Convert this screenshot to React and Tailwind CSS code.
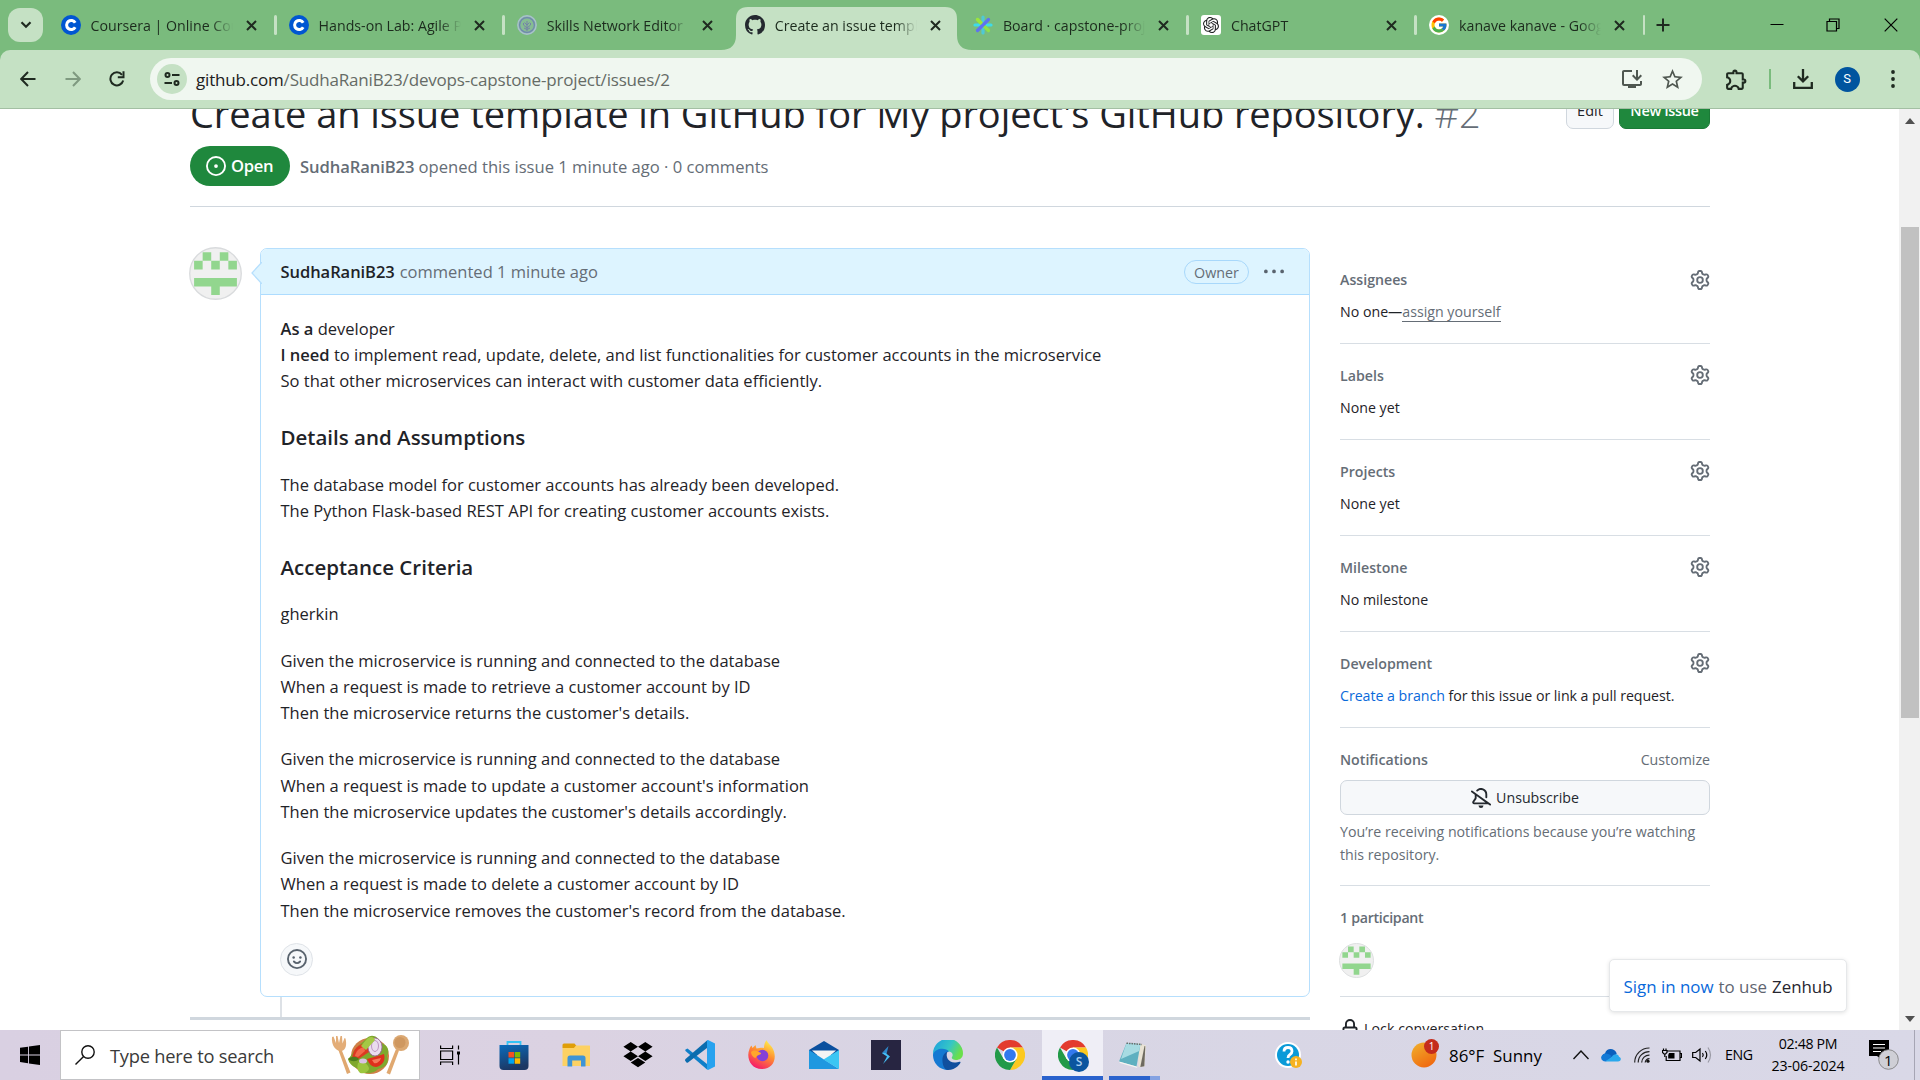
import React from "react";
import { SiOpenai } from "react-icons/si";
import { FcGoogle } from "react-icons/fc";
import { MdOutlineExtension, MdStarBorder, MdOutlineInstallDesktop } from "react-icons/md";

/* ---------- octicons ---------- */

const OCT = {
  issue: "M8 9.5a1.5 1.5 0 1 0 0-3 1.5 1.5 0 0 0 0 3ZM8 0a8 8 0 1 1 0 16A8 8 0 0 1 8 0ZM1.5 8a6.5 6.5 0 1 0 13 0 6.5 6.5 0 0 0-13 0Z",
  kebab: "M8 9a1.5 1.5 0 1 0 0-3 1.5 1.5 0 0 0 0 3ZM1.5 9a1.5 1.5 0 1 0 0-3 1.5 1.5 0 0 0 0 3Zm13 0a1.5 1.5 0 1 0 0-3 1.5 1.5 0 0 0 0 3Z",
  gear: "M8 0a8.2 8.2 0 0 1 .701.031C9.444.095 9.99.645 10.16 1.29l.288 1.107c.018.066.079.158.212.224.231.114.454.243.668.386.123.082.233.09.299.071l1.103-.303c.644-.176 1.392.021 1.82.63.27.385.506.792.704 1.218.315.675.111 1.422-.364 1.891l-.814.806c-.049.048-.098.147-.088.294.016.257.016.515 0 .772-.01.147.038.246.088.294l.814.806c.475.469.679 1.216.364 1.891a7.977 7.977 0 0 1-.704 1.217c-.428.61-1.176.807-1.82.63l-1.102-.302c-.067-.019-.177-.011-.3.071a5.909 5.909 0 0 1-.668.386c-.133.066-.194.158-.211.224l-.29 1.106c-.168.646-.715 1.196-1.458 1.26a8.006 8.006 0 0 1-1.402 0c-.743-.064-1.289-.614-1.458-1.26l-.289-1.106c-.018-.066-.079-.158-.212-.224a5.738 5.738 0 0 1-.668-.386c-.123-.082-.233-.09-.299-.071l-1.103.303c-.644.176-1.392-.021-1.82-.63a8.12 8.12 0 0 1-.704-1.218c-.315-.675-.111-1.422.363-1.891l.815-.806c.05-.048.098-.147.088-.294a6.214 6.214 0 0 1 0-.772c.01-.147-.038-.246-.088-.294l-.815-.806C.635 6.045.431 5.298.746 4.623a7.92 7.92 0 0 1 .704-1.217c.428-.61 1.176-.807 1.82-.63l1.102.302c.067.019.177.011.3-.071.214-.143.437-.272.668-.386.133-.066.194-.158.211-.224l.29-1.106C6.009.645 6.556.095 7.299.03 7.53.01 7.764 0 8 0Zm-.571 1.525c-.036.003-.108.036-.137.146l-.289 1.105c-.147.561-.549.967-.998 1.189-.173.086-.34.183-.5.29-.417.278-.97.423-1.529.27l-1.103-.303c-.109-.03-.175.016-.195.045-.22.312-.412.644-.573.99-.014.031-.021.11.059.19l.815.806c.411.406.562.957.53 1.456a4.709 4.709 0 0 0 0 .582c.032.499-.119 1.05-.53 1.456l-.815.806c-.081.08-.073.159-.059.19.162.346.353.677.573.989.02.03.085.076.195.046l1.102-.303c.56-.153 1.113-.008 1.53.27.161.107.328.204.501.29.447.222.85.629.997 1.189l.289 1.105c.029.109.101.143.137.146a6.6 6.6 0 0 0 1.142 0c.036-.003.108-.036.137-.146l.289-1.105c.147-.561.549-.967.998-1.189.173-.086.34-.183.5-.29.417-.278.97-.423 1.529-.27l1.103.303c.109.029.175-.016.195-.045.22-.313.411-.644.573-.99.014-.031.021-.11-.059-.19l-.815-.806c-.411-.406-.562-.957-.53-1.456a4.709 4.709 0 0 0 0-.582c-.032-.499.119-1.05.53-1.456l.815-.806c.081-.08.073-.159.059-.19a6.464 6.464 0 0 0-.573-.989c-.02-.03-.085-.076-.195-.046l-1.102.303c-.56.153-1.113.008-1.53-.27a4.44 4.44 0 0 0-.501-.29c-.447-.222-.85-.629-.997-1.189l-.289-1.105c-.029-.11-.101-.143-.137-.146a6.6 6.6 0 0 0-1.142 0ZM11 8a3 3 0 1 1-6 0 3 3 0 0 1 6 0ZM9.5 8a1.5 1.5 0 1 0-3.001.001A1.5 1.5 0 0 0 9.5 8Z",
  lock: "M4 4a4 4 0 0 1 8 0v2h.25c.966 0 1.75.784 1.75 1.75v5.5A1.75 1.75 0 0 1 12.25 15h-8.5A1.75 1.75 0 0 1 2 13.25v-5.5C2 6.784 2.784 6 3.75 6H4Zm8.25 3.5h-8.5a.25.25 0 0 0-.25.25v5.5c0 .138.112.25.25.25h8.5a.25.25 0 0 0 .25-.25v-5.5a.25.25 0 0 0-.25-.25ZM10.5 6V4a2.5 2.5 0 1 0-5 0v2Z",
  bellSlash: "m4.182 4.31.016.011 10.104 7.316.013.01 1.375.996a.75.75 0 1 1-.88 1.214L13.626 13H2.518a1.516 1.516 0 0 1-1.263-2.36l1.703-2.554A.255.255 0 0 0 3 7.947V5.305L.31 3.357a.75.75 0 1 1 .88-1.214Zm7.373 7.19L4.5 6.391v1.556c0 .346-.102.683-.294.97l-1.703 2.556a.017.017 0 0 0-.003.01c0 .005.002.009.005.012l.006.004.007.001ZM8 1.5c-.997 0-1.895.416-2.534 1.086A.75.75 0 1 1 4.38 1.55 5 5 0 0 1 13 5v2.373a.75.75 0 0 1-1.5 0V5A3.5 3.5 0 0 0 8 1.5ZM8 16a2 2 0 0 1-1.985-1.75c-.017-.137.097-.25.235-.25h3.5c.138 0 .252.113.235.25A2 2 0 0 1 8 16Z",
  github: "M8 0c4.42 0 8 3.58 8 8a8.013 8.013 0 0 1-5.45 7.59c-.4.08-.55-.17-.55-.38 0-.27.01-1.13.01-2.2 0-.75-.25-1.23-.54-1.48 1.78-.2 3.65-.88 3.65-3.95 0-.88-.31-1.59-.82-2.15.08-.2.36-1.02-.08-2.12 0 0-.67-.22-2.2.82-.64-.18-1.32-.27-2-.27-.68 0-1.36.09-2 .27-1.53-1.03-2.2-.82-2.2-.82-.44 1.1-.16 1.92-.08 2.12-.51.56-.82 1.28-.82 2.15 0 3.06 1.86 3.75 3.64 3.95-.23.2-.44.55-.51 1.07-.46.21-1.61.55-2.33-.66-.15-.24-.6-.83-1.23-.82-.67.01-.27.38.01.53.34.19.73.9.82 1.13.16.45.68 1.31 2.69.94 0 .67.01 1.3.01 1.49 0 .21-.15.45-.55.38A7.995 7.995 0 0 1 0 8c0-4.42 3.58-8 8-8Z",
};

function Octicon({ name, className = "size-5" }) {
  return (
    <svg viewBox="0 0 16 16" fill="currentColor" className={className}>
      <path d={OCT[name]} />
    </svg>
  );
}

/* ---------- favicons ---------- */

function CourseraIcon() {
  return (
    <svg viewBox="0 0 20 20" className="size-5">
      <circle cx="10" cy="10" r="10" fill="#0056d2" />
      <path d="M14.2 7.7A4.6 4.6 0 1 0 14.2 12.3" fill="none" stroke="#fff" strokeWidth="3" />
    </svg>
  );
}

function SkillsIcon() {
  return (
    <svg viewBox="0 0 20 20" className="size-5" fill="none">
      <circle cx="10" cy="10" r="9.2" fill="#86bd92" stroke="#a9bfd0" strokeWidth="1.4" />
      <circle cx="10" cy="10" r="7.4" stroke="#6f83b5" strokeWidth="1.2" />
      <path d="M10 16V6M10 13L6.5 10M10 13l3.5-3M10 10L7.5 7.5M10 10l2.5-2.5M6.5 10V8M13.5 10V8M7 13l3 1.500 3-1.500" stroke="#7583a8" strokeWidth="1" />
    </svg>
  );
}

function ZenIcon() {
  return (
    <svg viewBox="0 0 20 20" className="size-5" fill="none" strokeWidth="3.200" strokeLinecap="round">
      <path d="M10 2v16" stroke="#4fc9d6" />
      <path d="M2 10h16" stroke="#3edbe9" />
      <path d="M4.500 4.500l11 11" stroke="#8fe14a" />
      <path d="M15.500 4.500l-11 11" stroke="#5f72f0" />
      <path d="M4.500 4.500l3 3" stroke="#9be53c" />
    </svg>
  );
}

const TABS = [
  { title: "Coursera | Online Courses", icon: <CourseraIcon />, sep: true },
  { title: "Hands-on Lab: Agile Planning", icon: <CourseraIcon />, sep: true },
  { title: "Skills Network Editor", icon: <SkillsIcon />, sep: false },
  { title: "Create an issue template", icon: <Octicon name="github" className="size-5 text-[#24292f]" />, active: true },
  { title: "Board · capstone-project", icon: <ZenIcon />, sep: true },
  {
    title: "ChatGPT",
    icon: (
      <span className="flex size-5 items-center justify-center rounded-[3px] bg-white">
        <SiOpenai className="size-4 text-[#202123]" />
      </span>
    ),
    sep: true,
  },
  {
    title: "kanave kanave - Google Search",
    icon: (
      <span className="flex size-5 items-center justify-center rounded-full bg-white">
        <FcGoogle className="size-[18px]" />
      </span>
    ),
    sep: true,
  },
];

function Tab({ title, icon, active, sep }) {
  return (
    <div className="relative flex h-[50px] w-[228.1px] shrink-0 items-center pl-2.5">
      {active && (
        <svg viewBox="0 0 251 43" className="absolute -left-[14px] top-[7px] h-[43px] w-[251px]" fill="#c5e1c4">
          <path d="M0 43Q15 43 15 28V12Q15 0 27 0H224Q236 0 236 12V28Q236 43 251 43Z" />
        </svg>
      )}
      <span className="relative shrink-0">{icon}</span>
      <span className="relative ml-2.5 w-[145px] overflow-hidden whitespace-nowrap pt-px text-[14.2px] leading-5 text-[#1c2b1d] [mask-image:linear-gradient(to_right,black_120px,transparent_142px)]">
        {title}
      </span>
      <svg viewBox="0 0 30 20" className="relative h-5 w-[30px]" stroke="#1f2a20" strokeWidth="2" fill="none">
        <path d="M11 6l9 9M20 6l-9 9" />
      </svg>
      {sep && <span className="ml-[8.500px] h-5 w-[2.500px] rounded-full bg-[#c5e1c4]" />}
    </div>
  );
}

function TabStrip() {
  return (
    <div className="flex h-[50px] items-center bg-[#7abb7d]">
      <div className="ml-2 mr-[7.500px] flex h-[34px] w-[35px] shrink-0 items-center justify-center rounded-[12px] bg-[#c5e1c4]">
        <svg viewBox="0 0 12 8" className="h-2 w-3" fill="none" stroke="#1f2a20" strokeWidth="2.200">
          <path d="M1.500 1.200L6 5.700l4.500-4.500" />
        </svg>
      </div>
      {TABS.map((t) => (
        <Tab key={t.title} {...t} />
      ))}
      <svg viewBox="0 0 14 14" className="ml-[9px] size-[14px] shrink-0" stroke="#1f2a20" strokeWidth="2" fill="none">
        <path d="M7 .5v13M.5 7h13" />
      </svg>
      <div className="ml-auto flex shrink-0 items-center text-black">
        <svg viewBox="0 0 14 14" className="mr-[42px] size-[14px]" stroke="currentColor">
          <path d="M.5 6.500h13" />
        </svg>
        <svg viewBox="0 0 14 14" className="mr-[44px] size-[14px]" fill="none" stroke="currentColor" strokeWidth="1.200">
          <path d="M1 3.500h9.500V13H1zM3.500 3.500V1H13v9.500h-2.500" />
        </svg>
        <svg viewBox="0 0 14 14" className="mr-[22px] size-[14px]" fill="none" stroke="currentColor" strokeWidth="1.200">
          <path d="M.7.7l12.600 12.600M13.300.7L.7 13.300" />
        </svg>
      </div>
    </div>
  );
}

function Toolbar() {
  return (
    <div className="bg-[#7abb7d]">
      <div className="flex h-[59px] items-center rounded-t-[10px] border-b border-[#a3bfa3] bg-[#c5e1c4] text-[#1f2a20]">
        <svg viewBox="0 0 16 16" className="ml-5 h-4 w-4" fill="none" stroke="currentColor" strokeWidth="2">
          <path d="M15.500 8H1.500M8 1L1.200 8 8 15" />
        </svg>
        <svg viewBox="0 0 16 16" className="ml-[29px] h-4 w-4 text-[#7f9a80]" fill="none" stroke="currentColor" strokeWidth="2">
          <path d="M.5 8h14M8 1l6.800 7L8 15" />
        </svg>
        <svg viewBox="0 0 16 16" className="ml-[28px] h-4 w-4" fill="none" stroke="currentColor" strokeWidth="2">
          <path d="M14.200 9.500A6.500 6.500 0 1 1 13 3.800" />
          <path d="M14.500.3v5.900H8.800" />
        </svg>
        <div className="ml-[25px] flex h-[42px] w-[1552px] items-center rounded-full bg-[#f0f7f0] pl-[6.500px]">
          <span className="flex size-[30px] items-center justify-center rounded-full bg-[#c5e1c4]">
            <svg viewBox="0 0 16 14" className="h-[14px] w-4" fill="none" stroke="currentColor" strokeWidth="2">
              <circle cx="3.500" cy="3" r="2" />
              <path d="M8 3h7.500M.5 11h7.500" />
              <circle cx="12.500" cy="11" r="2" />
            </svg>
          </span>
          <span className="ml-[9.500px] whitespace-nowrap pt-px text-[17px] leading-6 tracking-[-0.18px] text-[#202020]">
            github.com<span className="text-[#656b66]">/SudhaRaniB23/devops-capstone-project/issues/2</span>
          </span>
          <div className="ml-auto mr-[17px] flex items-center gap-[16px] text-[#4f5750]">
            <MdOutlineInstallDesktop className="size-6" />
            <MdStarBorder className="size-[25px]" />
          </div>
        </div>
        <MdOutlineExtension className="ml-[22px] size-[25px]" />
        <span className="ml-[20px] h-5 w-[1.500px] bg-[#7abb7d]" />
        <svg viewBox="0 0 20 20" className="ml-[22px] size-5" fill="none" stroke="currentColor" strokeWidth="2.300">
          <path d="M10 0v12M4.800 7.200L10 12.400l5.200-5.200M1.200 13v5.800h17.600V13" />
        </svg>
        <span className="ml-[22px] flex size-[25px] items-center justify-center rounded-full bg-[#00549f] font-[Roboto] text-[13px] text-white">S</span>
        <svg viewBox="0 0 4 18" className="ml-[31px] h-[18px] w-1" fill="currentColor">
          <circle cx="2" cy="2" r="1.900" />
          <circle cx="2" cy="9" r="1.900" />
          <circle cx="2" cy="16" r="1.900" />
        </svg>
      </div>
    </div>
  );
}

/* ---------- issue page ---------- */

function Avatar({ className }) {
  return (
    <svg viewBox="0 0 52 52" className={className}>
      <circle cx="26" cy="26" r="25.300" fill="#f0f0f0" stroke="#d9dbdd" strokeWidth="1.300" />
      <path
        d="M13.400 5.200h8.400v8.400h-8.400zM30.200 5.200h8.400v8.400h-8.400zM5 13.600h8.400V22H5zM21.800 13.600h8.400V22h-8.400zM38.600 13.600H47V22h-8.400zM5 30.400h42v8.400H30.200v8.400h-8.400v-8.400H5z"
        fill="#92d68e"
      />
    </svg>
  );
}

function IssueHeader() {
  return (
    <div className="border-b border-[#d0d7de] pb-5">
      <div className="flex h-[59px] items-start justify-between">
        <h1 className="mt-px whitespace-nowrap text-[38px] leading-[50px] tracking-[-0.07px]">
          Create an issue template in GitHub for My project's GitHub repository.{" "}
          <span className="font-light text-[#656d76]">#2</span>
        </h1>
        <div className="mt-0.5 flex gap-[5px] text-[14.500px] font-medium">
          <span className="flex h-10 w-12 items-center justify-center rounded-[7px] border border-[#d0d7de] bg-[#f6f8fa] pt-1">Edit</span>
          <span className="flex h-10 w-[91px] items-center justify-center whitespace-nowrap rounded-[7px] border border-[#1b7a37] bg-[#1f883d] pt-1 font-semibold tracking-[-0.3px] text-white">
            New issue
          </span>
        </div>
      </div>
      <div className="flex items-center gap-2.5">
        <span className="flex h-10 w-[100px] items-center gap-[5px] rounded-full bg-[#1f883d] pl-4 text-[16.600px] font-semibold tracking-[-0.3px] text-white">
          <Octicon name="issue" />
          <span className="pt-px">Open</span>
        </span>
        <span className="pt-0.5 text-[16.600px] text-[#656d76]">
          <b className="font-semibold tracking-[-0.1px]">SudhaRaniB23</b> opened this issue 1 minute ago · 0 comments
        </span>
      </div>
    </div>
  );
}

const SCENARIOS = [
  [
    "Given the microservice is running and connected to the database",
    "When a request is made to retrieve a customer account by ID",
    "Then the microservice returns the customer's details.",
  ],
  [
    "Given the microservice is running and connected to the database",
    "When a request is made to update a customer account's information",
    "Then the microservice updates the customer's details accordingly.",
  ],
  [
    "Given the microservice is running and connected to the database",
    "When a request is made to delete a customer account by ID",
    "Then the microservice removes the customer's record from the database.",
  ],
];

function Comment() {
  return (
    <div className="w-[1120px]">
      <div className="flex justify-between">
        <Avatar className="-ml-px -mt-px size-[53px]" />
        <div className="relative flex h-[749px] w-[1050px] flex-col rounded-[7px] border border-[#b6dffd]">
          <svg viewBox="0 0 11 22" className="absolute -left-[10px] top-[13px] h-[22px] w-[11px]">
            <path d="M11 0L1 11l10 11" fill="#ddf4ff" stroke="#b6dffd" strokeWidth="1.300" />
          </svg>
          <div className="flex h-[46px] items-center rounded-t-[6px] border-b border-[#addcff] bg-[#ddf4ff] pl-[19.500px] pr-[25px] text-[16.500px]">
            <b className="pt-px font-semibold tracking-[-0.05px]">SudhaRaniB23</b>
            <span className="ml-[5px] pt-px text-[#656d76]">commented 1 minute ago</span>
            <span className="ml-auto flex h-6 w-[65px] items-center justify-center rounded-full border border-[#a8d8fb] pt-0.5 text-[14.300px] font-medium text-[#656d76]">
              Owner
            </span>
            <Octicon name="kebab" className="ml-[15px] size-5 text-[#59636e]" />
          </div>
          <div className="flex flex-col gap-5 px-[19.500px] pt-[20.500px] text-[16.530px] leading-[26.250px]">
            <p>
              <b className="font-semibold">As a</b> developer
              <br />
              <b className="font-semibold">I need</b> to implement read, update, delete, and list functionalities for customer accounts in the microservice
              <br />
              So that other microservices can interact with customer data efficiently.
            </p>
            <h3 className="mt-2.5 text-[20.500px] font-semibold leading-[27.300px]">Details and Assumptions</h3>
            <p>
              The database model for customer accounts has already been developed.
              <br />
              The Python Flask-based REST API for creating customer accounts exists.
            </p>
            <h3 className="mt-2.5 text-[20.500px] font-semibold leading-[27.300px]">Acceptance Criteria</h3>
            <p>gherkin</p>
            {SCENARIOS.map((lines) => (
              <div key={lines[1]}>
                {lines.map((l) => (
                  <p key={l}>{l}</p>
                ))}
              </div>
            ))}
          </div>
          <span className="ml-[19px] mt-[19px] flex size-[33px] items-center justify-center rounded-full border border-[#dfe3e8] bg-[#f6f8fa] text-[#59636e]">
            <svg viewBox="0 0 16 16" className="size-5" fill="currentColor">
              <circle cx="8" cy="8" r="7.250" fill="none" stroke="currentColor" strokeWidth="1.500" />
              <circle cx="5.300" cy="6.700" r="1" />
              <circle cx="10.700" cy="6.700" r="1" />
              <path d="M5.500 10q2.500 2.600 5 0" fill="none" stroke="currentColor" strokeWidth="1.500" strokeLinecap="round" />
            </svg>
          </span>
        </div>
      </div>
      <div className="ml-[90px] h-5 w-0.5 bg-[#dde1e6]" />
      <div className="h-[2.500px] bg-[#d0d7de]" />
    </div>
  );
}

function SideSection({ title, gearClass = "-mt-[3px] size-5", children }) {
  return (
    <section className="h-24 border-b border-[#d8dee4] pt-[21px]">
      <div className="flex h-[22px] items-center justify-between font-semibold text-[#656d76]">
        {title}
        <Octicon name="gear" className={gearClass} />
      </div>
      <div className="mt-2.5 leading-[22px]">{children}</div>
    </section>
  );
}

function Sidebar() {
  return (
    <aside className="w-[370px] text-[14.200px]">
      <SideSection title="Assignees" gearClass="size-5">
        No one—<span className="border-b border-[#656d76] text-[#656d76]">assign yourself</span>
      </SideSection>
      <SideSection title="Labels">None yet</SideSection>
      <SideSection title="Projects">None yet</SideSection>
      <SideSection title="Milestone">No milestone</SideSection>
      <SideSection title="Development">
        <span className="tracking-[-0.04px]">
          <span className="text-[#0969da]">Create a branch</span> for this issue or link a pull request.
        </span>
      </SideSection>
      <section className="h-[158px] border-b border-[#d8dee4] pt-[21px] text-[#656d76]">
        <div className="flex h-[22px] items-center justify-between">
          <span className="font-semibold">Notifications</span>
          <span>Customize</span>
        </div>
        <div className="mt-[9px] flex h-[35px] items-center justify-center gap-[5px] rounded-[7px] border border-[#d0d7de] bg-[#f6f8fa] font-medium text-[#24292f]">
          <Octicon name="bellSlash" />
          Unsubscribe
        </div>
        <p className="mt-[5px] leading-[23px]">
          You’re receiving notifications because you’re watching
          <br />
          this repository.
        </p>
      </section>
      <section className="h-[111px] border-b border-[#d8dee4] pt-[21px] text-[#656d76]">
        <div className="h-[22px] font-semibold leading-[22px] tracking-[-0.3px]">1 participant</div>
        <Avatar className="-ml-[1.500px] mt-[14px] size-[35px]" />
      </section>
      <div className="flex items-center gap-1 pt-[21px] font-medium tracking-[0.05px]">
        <Octicon name="lock" />
        Lock conversation
      </div>
    </aside>
  );
}

function Page() {
  return (
    <div className="relative flex h-[921px] justify-between overflow-hidden bg-white text-[#1f2328]">
      <div className="-mt-[22px] ml-[190px] w-[1520px]">
        <IssueHeader />
        <div className="mt-[41px] flex justify-between">
          <Comment />
          <Sidebar />
        </div>
      </div>
      <div className="flex w-[21px] flex-col items-center bg-[#f1f1f1]">
        <svg viewBox="0 0 10 6" className="mt-[9px] h-1.5 w-2.5" fill="#505050">
          <path d="M0 6L5 0l5 6z" />
        </svg>
        <div className="mt-[103px] h-[491px] w-[18px] bg-[#c1c1c1]" />
        <svg viewBox="0 0 10 6" className="mb-2 mt-auto h-1.5 w-2.5" fill="#505050">
          <path d="M0 0l5 6 5-6z" />
        </svg>
      </div>
      <div className="absolute bottom-[18px] right-[73px] flex h-[53px] w-[238px] items-center justify-center gap-[5px] whitespace-nowrap rounded-[5px] border border-[#e6e8ea] bg-white pt-[3px] text-[16.900px] text-[#5f6570] shadow-[0_1px_4px_rgba(0,0,0,0.12)]">
        <span className="font-medium text-[#0969da]">Sign in now</span> to use <span className="font-medium text-[#26262f]">Zenhub</span>
      </div>
    </div>
  );
}

/* ---------- taskbar ---------- */

function ChromeLogo({ className }) {
  return (
    <svg viewBox="0 0 30 30" className={className}>
      <path d="M15 15L2 7.500A15 15 0 0 1 28 7.500H15z" fill="#e33b2e" />
      <path d="M28 7.500A15 15 0 0 1 15 30L21.500 18.700 15 7.500z" fill="#fcc91f" />
      <path d="M15 30A15 15 0 0 1 2 7.500l6.500 11.200L15 22l6.500-3.300z" fill="#229a48" />
      <circle cx="15" cy="15" r="7.500" fill="#fff" />
      <circle cx="15" cy="15" r="5.900" fill="#3279ee" />
    </svg>
  );
}

const Store = () => (
  <svg viewBox="0 0 30 30" className="size-[30px]">
    <defs>
      <linearGradient id="store" x2="0.3" y2="1">
        <stop stopColor="#0a6cbc" />
        <stop offset="1" stopColor="#1c3763" />
      </linearGradient>
    </defs>
    <path d="M8.500 6V2h13v4" fill="none" stroke="#35c3f5" strokeWidth="1.800" />
    <path d="M.5 5h29v21q0 4-4 4h-21q-4 0-4-4z" fill="url(#store)" />
    <path d="M9.500 12H15v5.500H9.500z" fill="#f25022" />
    <path d="M15.700 12h5.500v5.500h-5.500z" fill="#7fba00" />
    <path d="M9.500 18.200H15v5.500H9.500z" fill="#00a4ef" />
    <path d="M15.700 18.200h5.500v5.500h-5.500z" fill="#ffb900" />
  </svg>
);

const Explorer = () => (
  <svg viewBox="0 0 30 30" className="size-[30px]">
    <path d="M1.500 5q0-1.500 1.500-1.500h10.500l2 2.500-2 2h-12z" fill="#e09e08" />
    <path d="M1.500 8H13l2-2.500h13.500q.5 0 .5.800V26H1.500z" fill="#fdd163" />
    <path d="M6.500 26.500V18q0-2.500 2.500-2.500h13q2.500 0 2.500 2.500v8.500H20V20.500h-8.800v6z" fill="#3e94d6" />
  </svg>
);

const Dropbox = () => (
  <svg viewBox="0 0 30 30" className="size-[30px]">
    <path d="M7.700 2l7.300 4.700-7.300 4.700L.4 6.700zM22.300 2l7.300 4.700-7.300 4.700L15 6.700zM7.700 11.600l7.300 4.700L7.700 21 .4 16.300zM22.300 11.600l7.300 4.700-7.300 4.700-7.300-4.700zM15 17.900l7.300 4.700L15 27.300l-7.300-4.700z" />
  </svg>
);

const VsCode = () => (
  <svg viewBox="0 0 30 30" className="size-[30px]">
    <path d="M2.500 8.500L22 24v5.500L.5 11q-.5-.8 0-1.500z" fill="#0f7fc9" />
    <path d="M.5 19L22 .5V8L3 22.500q-1 .5-1.500 0L.3 21q-.5-1 .2-2z" fill="#0b6cae" />
    <path d="M22 .3l1-.3 7 3.400v23.200L23 30l-1-.5z" fill="#27a2ef" />
  </svg>
);

const Firefox = () => (
  <svg viewBox="0 0 30 30" className="size-[30px]">
    <defs>
      <linearGradient id="fox" x1="0.8" x2="0.3" y2="1">
        <stop stopColor="#fff44f" />
        <stop offset="0.45" stopColor="#ff9130" />
        <stop offset="1" stopColor="#f5156c" />
      </linearGradient>
    </defs>
    <path d="M19.500.3c1.500 3.200 3.600 4.200 5.500 7C31 17 27 29 15 29S-1 17 2.500 9c.4-1.500 1.200-2.700 2-3.500l1 2.500 3-3 1 3.500c3-.5 5-1 7.500-.5C17 5 18 2 19.500.3z" fill="url(#fox)" />
    <circle cx="15.500" cy="15.500" r="5.800" fill="#8440d8" />
    <path d="M4 12c4-3 6-.5 9 .5 2 .5 1 2-2 2.800-1 1.500-2.500 1-2.500 3C6 17 4 15 4 12z" fill="#ffa72b" />
  </svg>
);

const Mail = () => (
  <svg viewBox="0 0 30 30" className="size-[30px]">
    <path d="M0 10L15 1l15 9v5H0z" fill="#0a4f9e" />
    <path d="M3 10.500h24L15 21z" fill="#f4f4f4" />
    <path d="M0 10l30 19H0z" fill="#1f98e0" />
    <path d="M30 10v19L14.500 19.500z" fill="#3bc6f3" />
  </svg>
);

const Shortcut = () => (
  <span className="flex size-[30px] items-center justify-center bg-[#272541]">
    <svg viewBox="0 0 12 18" className="h-[18px] w-3">
      <path d="M8.500 0L2 7l3.500 2.500L6.500 8l.500-2z" fill="#2f86c8" />
      <path d="M2 7l5 3.500L3 18l7-7.500L5.500 7z" fill="#45bdf3" />
    </svg>
  </span>
);

const Edge = () => (
  <svg viewBox="0 0 30 30" className="size-[30px]">
    <defs>
      <linearGradient id="edgeTop" x2="1" y2="0.4">
        <stop stopColor="#1b9de0" />
        <stop offset="0.6" stopColor="#35c6c6" />
        <stop offset="1" stopColor="#6adf4c" />
      </linearGradient>
    </defs>
    <path d="M0 14A15 15 0 0 1 30 13.500c0 4.500-3.500 6.500-7 6.500-3 0-5-1.500-4-3 1.500-2 .5-5-3-5.500-6-1-11 1.500-16 2.500z" fill="url(#edgeTop)" />
    <path d="M0 14.500c2-6.500 12.500-7.500 16-3-5 1-6 6-3.500 11.500C14 27 17 30 15 30A15 15 0 0 1 0 14.500z" fill="#1579d2" />
    <path d="M9.500 18c.5-3 2.500-5.500 5-6.500-2.500 5 1 11 7 11 2.500 0 5-1.500 6-.5.500 1-4.500 8-12.500 8-4 0-6-6-5.500-12z" fill="#104f9e" />
  </svg>
);

const Notepad = () => (
  <svg viewBox="0 0 30 30" className="size-[30px]">
    <path d="M20 3l8 2.500-1.500 21-6 .5z" fill="#e9e3d4" />
    <path d="M26.500 6l.8.3-1 20-4 .8z" fill="#6e6a60" />
    <path d="M8.500 3L22.500 4l-4 22.500L1 21.500z" fill="#5fb0c0" />
    <path d="M8.500 3L22.500 4l-1.300 7L3 19z" fill="#a7dbe2" />
    <path d="M8.500 3.200L24 4.500" stroke="#6b6b6b" strokeWidth="1.500" strokeDasharray="1.500 1" />
    <path d="M1 21.500L18.500 26.500l1 1.500L2 23z" fill="#f6f6f2" />
  </svg>
);

const APPS = [
  ["store", <Store />],
  ["explorer", <Explorer />],
  ["dropbox", <Dropbox />],
  ["vscode", <VsCode />],
  ["firefox", <Firefox />],
  ["mail", <Mail />],
  ["shortcut", <Shortcut />],
  ["edge", <Edge />],
  ["chrome", <ChromeLogo className="size-[30px]" />],
];

function Salad() {
  return (
    <svg viewBox="0 0 80 42" className="h-[42px] w-20">
      <path d="M10.500 13l10 25.500-3.500 1.500L8 15z" fill="#e0a870" />
      <path d="M2 3l1.500-.5L6 9V2h1.500L9 9l1.500-7H12l.500 7.500L14.500 4l1 .5c1.500 6 .5 11.500-4 12.500S1 12 2 3z" fill="#e3ad78" />
      <circle cx="71" cy="9" r="8" fill="#dba872" />
      <circle cx="70" cy="8.500" r="5.500" fill="#cf9860" />
      <path d="M66 15l3 1.500L60 40.500l-3.500-1.500z" fill="#e0a870" />
      <ellipse cx="40" cy="22" rx="19" ry="18" fill="#cf8047" />
      <path d="M36 5c5-6 12-3 15 4 7 2 9 8 6 13 3 7-2 12-9 13-4 5-14 6-18 0-6-1-11-5-12-10 3-2 4-7 8-10 2-4 6-6 10-10z" fill="#7fa82d" />
      <path d="M22 24c1-9 6-14 15-15l2 9-12 8z" fill="#dd3a22" />
      <path d="M25 22c1-5 4-8 9-9l1 4-7 6z" fill="#f26a4a" />
      <ellipse cx="45" cy="13" rx="7" ry="9" fill="#eadcee" stroke="#9b5aa0" strokeWidth=".8" />
      <ellipse cx="45" cy="12" rx="3.500" ry="5.500" fill="none" stroke="#b284b8" strokeWidth=".8" />
      <path d="M37 25c6-2 12-3 17-5 2 7-2 12-8 13-4 0-7-3-9-8z" fill="#df2f1c" />
      <path d="M42 26l9-2c-1 4-5 6-7 5z" fill="#f47a5c" />
      <path d="M28 29c5-3 9 0 11 5 0 4-5 6-9 5-3-3-3-6-2-10z" fill="#9cc63e" />
      <path d="M18 25c4-3 8-3 11 0-3 3-7 3-11 0z" fill="#4e7d1d" />
      <path d="M36 6c3-4 8-4 9 0l-9 10-5-4z" fill="#a4c845" />
      <ellipse cx="33" cy="27" rx="4" ry="2.500" fill="#d9c3e2" />
    </svg>
  );
}

function Taskbar() {
  return (
    <div className="flex h-[50px] bg-[linear-gradient(90deg,#d9d0e2_0%,#dbd2e2_30%,#d8d5e4_50%,#d9d8e7_100%)] text-black">
      <div className="flex w-[60px] items-center justify-center">
        <svg viewBox="0 0 20 20" className="size-5">
          <path d="M0 2.800L8 1.700v7.800H0zM8.900 1.600L20 0v9.500H8.900zM0 10.400h8v7.800l-8-1.100zM8.900 10.400H20V20L8.900 18.400z" />
        </svg>
      </div>
      <div className="flex w-[360px] items-center border border-[#c3c3c6] bg-white pl-[14px]">
        <svg viewBox="0 0 20 20" className="size-5" fill="none" stroke="#111" strokeWidth="1.400">
          <circle cx="13" cy="7" r="6.200" />
          <path d="M8.600 11.400L.5 19.500" />
        </svg>
        <span className="ml-[15px] whitespace-nowrap pt-px text-[18.300px] tracking-[-0.220px] text-[#3a3a3a]">Type here to search</span>
        <span className="ml-auto mr-[9px]">
          <Salad />
        </span>
      </div>
      <div className="flex w-[63px] items-center pl-5">
        <svg viewBox="0 0 20 20" className="size-5" fill="none" stroke="#000" strokeWidth="1.200">
          <path d="M.6.5v3h12v-3M.6 6h12v8.500H.6zM.6 20v-3h12v3M18.500.5v4M18.500 9v10.500" />
          <path d="M17 6.500h3v3h-3z" fill="#000" stroke="none" />
        </svg>
      </div>
      {APPS.map(([name, icon]) => (
        <div key={name} className="flex w-[62px] items-center justify-center">
          {icon}
        </div>
      ))}
      <div className="relative ml-px flex w-[61px] items-center justify-center border-b-4 border-[#2a62cd] bg-[#efeef6] pt-1">
        <ChromeLogo className="size-[30px]" />
        <span className="absolute bottom-[4px] left-[27px] flex size-5 items-center justify-center rounded-full bg-[#0b559f] text-[12px] font-semibold text-[#a9cdf0]">S</span>
      </div>
      <div className="ml-[6px] flex w-[51px] flex-col items-center">
        <div className="flex flex-1 items-center pr-1 pt-1">
          <Notepad />
        </div>
        <div className="flex h-1 w-full">
          <span className="w-[41px] bg-[#2a62cd]" />
          <span className="w-[10px] bg-[#84a2e2]" />
        </div>
      </div>
      <div className="ml-[114px] flex w-7 items-center">
        <svg viewBox="0 0 28 36" className="h-9 w-7">
          <circle cx="14" cy="18" r="13" fill="#fff" />
          <circle cx="14" cy="18" r="11" fill="#0a9ad8" />
          <path d="M10 14.500q0-4 4-4t4 3.800q0 2-2 3.200t-2 3.500" fill="none" stroke="#fff" strokeWidth="2.800" />
          <circle cx="14" cy="25" r="1.700" fill="#fff" />
          <circle cx="22" cy="25" r="6" fill="#f6b220" />
          <path d="M22 24.500v4M22 21.500v1.700" stroke="#fff" strokeWidth="1.600" />
        </svg>
      </div>
      <div className="ml-auto flex items-center">
        <div className="relative flex w-[38px] items-center">
          <svg viewBox="0 0 26 26" className="size-[26px]">
            <defs>
              <linearGradient id="sun" x2="0.6" y2="1">
                <stop stopColor="#f0b22c" />
                <stop offset="1" stopColor="#f06a10" />
              </linearGradient>
            </defs>
            <circle cx="13" cy="13" r="12.500" fill="url(#sun)" />
          </svg>
          <span className="absolute -top-[3px] left-[13px] flex size-[15px] items-center justify-center rounded-full bg-[#c42b1c] text-[10px] text-white">1</span>
        </div>
        <span className="w-[124px] whitespace-pre pt-px text-[16.900px]">86°F  Sunny</span>
        <svg viewBox="0 0 16 10" className="h-2.5 w-4" fill="none" stroke="#111" strokeWidth="1.400">
          <path d="M.5 9L8 1l7.500 8" />
        </svg>
        <svg viewBox="0 0 20 14" className="ml-3 h-[14px] w-5">
          <path d="M4 5.500C5 1 10 0 13 2c2 1.200 2.500 3 2.700 4L8 12.500H3C0 12 0 6.500 4 5.500z" fill="#0a5fbd" />
          <path d="M2 6.500c3-2 6-.5 8.500 1.500L5 13.500C-.5 13.500-1 8.500 2 6.500z" fill="#1379d6" />
          <path d="M4.500 13.300L11 8.500c2-3 6-3 7 .2 3 1 2 4.800-1 4.800H6q-.8 0-1.500-.2z" fill="#29a8ec" />
        </svg>
        <svg viewBox="0 0 16 16" className="ml-[13px] size-4" fill="none" stroke="#222" strokeWidth="1.200">
          <path d="M.7 15.500A14.500 14.500 0 0 1 15.500 1M4.200 15.500A11 11 0 0 1 15.500 4.600M7.700 15.500A7.500 7.500 0 0 1 15.500 8.100M11.200 15.500a4 4 0 0 1 4.300-3.800" />
          <circle cx="14" cy="14.200" r="1.600" fill="#111" stroke="none" />
        </svg>
        <svg viewBox="0 0 20 14" className="ml-3 h-[14px] w-5" fill="none" stroke="#000" strokeWidth="1.200">
          <path d="M5 3h13v9.500H4.200V8M18.300 5.500h1.200v4h-1.200" />
          <path d="M7 5h5.500v5.500H6.200V7z" fill="#000" stroke="none" />
          <path d="M1.500.5v2M4 .5v2M.5 2.500h4.500v2L3.500 6H2L.5 4.500zM2.800 6v3" />
        </svg>
        <svg viewBox="0 0 20 18" className="ml-[10px] h-[18px] w-5" fill="none" stroke="#000" strokeWidth="1.200">
          <path d="M.7 6.500h3L8 3v12l-4.300-3.500h-3z" />
          <path d="M10.500 7q1.500 2 0 4M13.300 5q3 4 0 8" />
          <path d="M16 1.500q5 7.500 0 15" stroke="#9a9aa5" />
        </svg>
        <span className="ml-[13px] w-[29px] whitespace-nowrap text-[14.200px] tracking-[-0.4px]">ENG</span>
        <div className="ml-[15px] w-[78px] whitespace-nowrap text-center text-[14.200px] leading-[22.500px]">
          <div className="tracking-[-0.35px]">02:48 PM</div>
          <div className="tracking-[-0.1px]">23-06-2024</div>
        </div>
        <div className="relative ml-[22px] w-[45px]">
          <svg viewBox="0 0 30 32" className="h-8 w-[30px]">
            <path d="M0 1h20v16h-8v3l-4-3H0z" />
            <path d="M4 5.500h12M4 9h12M4 12.500h8" stroke="#fff" strokeWidth="1.200" />
            <circle cx="19.500" cy="20.500" r="9.800" fill="#cfcfd6" stroke="#777" strokeWidth=".8" />
          </svg>
          <span className="absolute left-[15px] top-[10px] text-[15px] leading-[22px]">1</span>
        </div>
        <span className="mr-[5px] h-[50px] w-px bg-[#a6a5b4]" />
      </div>
    </div>
  );
}

export default function App() {
  return (
    <div className="h-[1080px] w-[1920px] overflow-hidden bg-white font-['Open_Sans','Noto_Sans',sans-serif]">
      <TabStrip />
      <Toolbar />
      <Page />
      <Taskbar />
    </div>
  );
}
